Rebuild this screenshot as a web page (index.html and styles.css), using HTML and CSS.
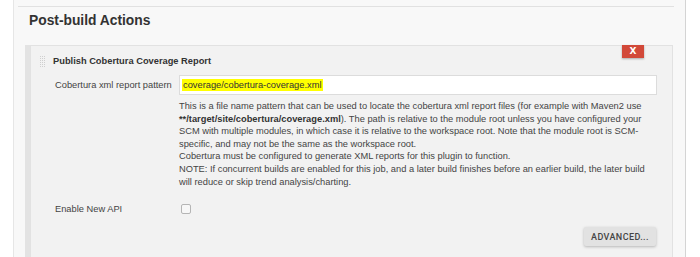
FILE: index.html
```html
<!DOCTYPE html>
<html lang="en">

<head>
  <meta charset="UTF-8" />
  <title>Post-build Actions</title>
  <link rel="stylesheet" href="styles.css">
</head>

<body>
  <div class="page">
    <div class="section">
      <h2 class="section-title">Post-build Actions</h2>

      <div class="step">
        <div class="step-inner">
          <button class="delete-btn" type="button">X</button>

          <div class="step-header">
            <span class="handle"></span>
            <span class="step-title">Publish Cobertura Coverage Report</span>
          </div>

          <div class="row">
            <label class="row-label" for="pattern">Cobertura xml report pattern</label>
            <div class="row-field">
              <div class="text-input" id="pattern"><span class="mark">coverage/cobertura-coverage.xml</span></div>
              <div class="help">
                This is a file name pattern that can be used to locate the cobertura xml report files (for example with Maven2 use
                <b>**/target/site/cobertura/coverage.xml</b>). The path is relative to the module root unless you have configured your
                SCM with multiple modules, in which case it is relative to the workspace root. Note that the module root is SCM-specific,
                and may not be the same as the workspace root.<br>
                Cobertura must be configured to generate XML reports for this plugin to function.<br>
                NOTE: If concurrent builds are enabled for this job, and a later build finishes before an earlier build, the later build
                will reduce or skip trend analysis/charting.
              </div>
            </div>
          </div>

          <div class="row row-check">
            <label class="row-label" for="newapi">Enable New API</label>
            <div class="row-field">
              <span class="checkbox" id="newapi"></span>
            </div>
          </div>

          <div class="actions">
            <button class="advanced-btn" type="button">Advanced...</button>
          </div>
        </div>
      </div>
    </div>
  </div>
</body>

</html>
```

FILE: styles.css
```css
:root {
  --page-bg: #f8f8f8;
  --panel-bg: #f2f2f2;
  --line: #e2e2e2;
  --text: #333333;
  --muted: #444444;
  --danger: #d24939;
}

* {
  box-sizing: border-box;
  margin: 0;
  padding: 0;
}

body {
  height: 100vh;
  background-color: #ffffff;
  color: var(--text);
  font-family: 'Liberation Sans', Arial, sans-serif;
  overflow: hidden;
}

.page {
  height: 100%;
  width: 673px;
  margin-left: 13px;
  background-color: var(--page-bg);
  border-left: 1px solid #e6e6e6;
  border-right: 1px solid #d4d4d4;
  padding-top: 6px;
}

.section {
  margin-left: 4px;
  margin-right: 11px;
  border-top: 1px solid #e1e1e1;
}

.section-title {
  font-size: 13.8px;
  font-weight: 700;
  color: #333;
  padding: 5px 0 0 11px;
  line-height: 17px;
  height: 38px;
}

.step {
  margin-left: 7px;
  margin-right: 1px;
  border-left: 5px solid #e3e3e3;
}

.step-inner {
  position: relative;
  background-color: var(--panel-bg);
  border: 1px solid var(--line);
  border-bottom: none;
  height: 230px;
  padding: 8px 16px 0 24px;
}

.delete-btn {
  position: absolute;
  top: -1px;
  right: 28px;
  width: 22px;
  height: 13px;
  border: none;
  background-color: var(--danger);
  color: #fff;
  font-family: 'DejaVu Sans', sans-serif;
  font-size: 9px;
  font-weight: 700;
  line-height: 13px;
  box-shadow: 0 1px 2px rgba(0, 0, 0, 0.3);
}

.step-header {
  display: flex;
  align-items: center;
  gap: 7px;
  height: 14px;
  margin-left: -16px;
}

.handle {
  width: 7px;
  height: 12px;
  background:
    linear-gradient(to right, var(--panel-bg) 50%, transparent 50%) 0 0 / 2px 2px,
    linear-gradient(to bottom, var(--panel-bg) 50%, transparent 50%) 0 0 / 2px 2px,
    #cfcfcf;
}

.step-title {
  font-size: 9.3px;
  font-weight: 700;
  color: #333;
}

.row {
  display: grid;
  grid-template-columns: 124px 478px;
  margin-top: 7px;
}

.row-label {
  font-size: 9.3px;
  color: var(--muted);
  line-height: 20px;
}

.text-input {
  height: 20px;
  background-color: #fff;
  border: 1px solid #dcdcdc;
  padding: 3px 2px;
  font-size: 9.3px;
  line-height: 12px;
  color: #333;
}

.mark {
  display: inline-block;
  background-color: #ffff00;
  padding: 0 1px;
}

.help {
  margin-top: 5px;
  padding-right: 8px;
  font-size: 9.3px;
  line-height: 12.6px;
  color: var(--muted);
}

.help b {
  color: #333;
}

.row-check {
  margin-top: 11px;
}

.checkbox {
  display: block;
  width: 10px;
  height: 10px;
  margin: 5px 0 0 2px;
  border: 1px solid #b5b5b5;
  border-radius: 2px;
  background-color: #f7f7f7;
}

.actions {
  display: flex;
  justify-content: flex-end;
  margin-top: 8px;
}

.advanced-btn {
  height: 19px;
  width: 72px;
  border: none;
  border-radius: 2px;
  background-color: #e2e2e2;
  color: #444;
  font-family: 'Roboto', 'Liberation Sans', sans-serif;
  font-size: 9px;
  font-weight: 500;
  letter-spacing: 0.4px;
  text-transform: uppercase;
  box-shadow: 0 1px 3px rgba(0, 0, 0, 0.25);
}
```
